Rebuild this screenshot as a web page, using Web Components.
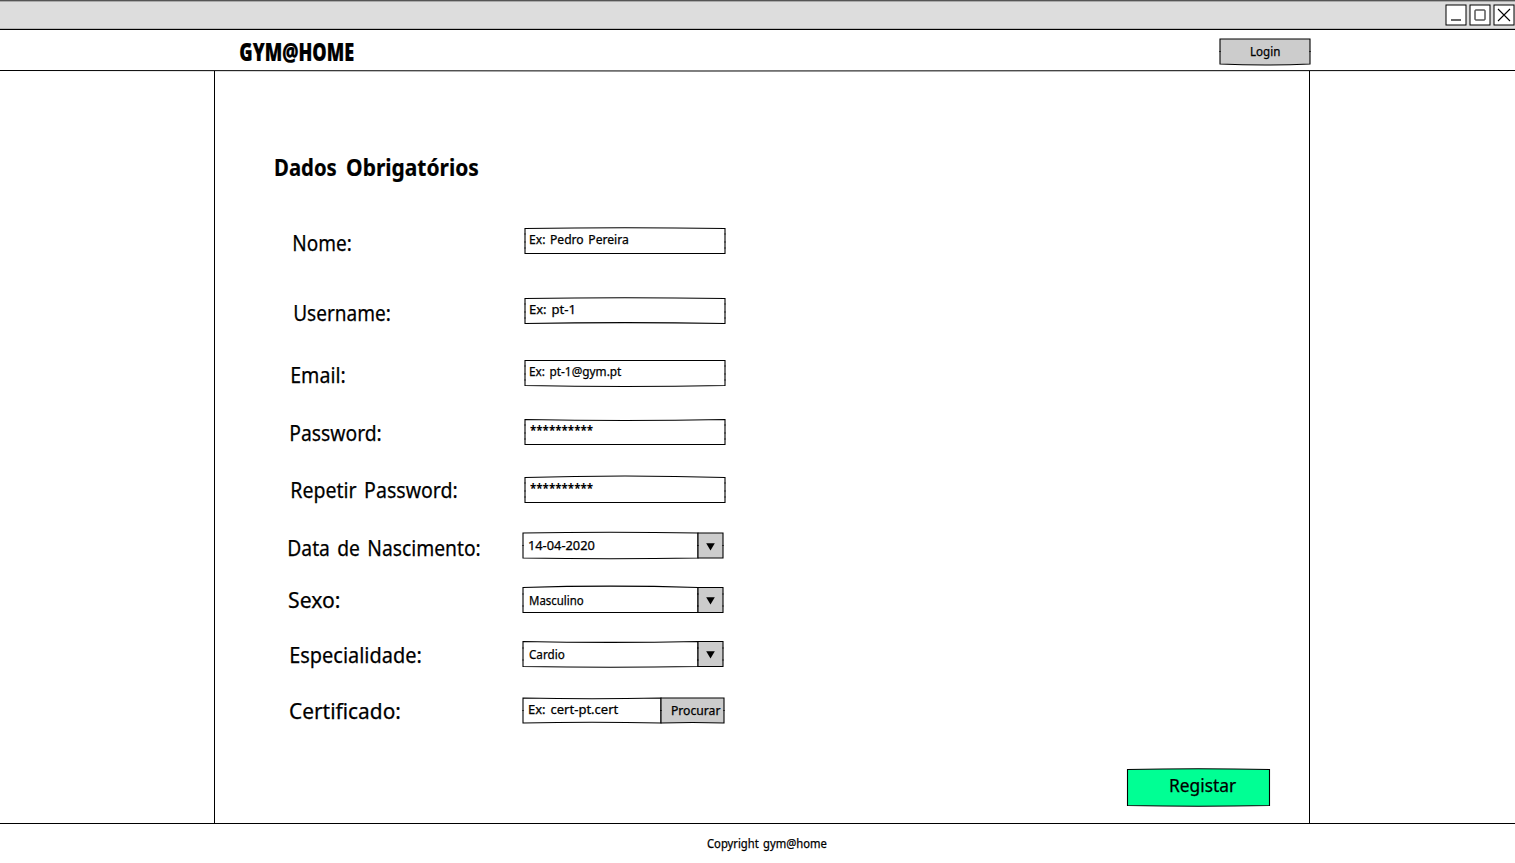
<!DOCTYPE html>
<html lang="pt">
<head>
<meta charset="utf-8">
<title>GYM@HOME</title>
<style>
html,body{margin:0;height:100%;background:#fff;color:#000;font-family:"Noto Sans",sans-serif;overflow:hidden}
</style>
</head>
<body>
<gym-page></gym-page>
<script>
const pen = document.createElement('canvas').getContext('2d');

// A line of text whose ink fills a given width: w = ink width, base = baseline from the top of its container.
class SkText extends HTMLElement {
  connectedCallback() {
    const n = (a, d) => this.hasAttribute(a) ? +this.getAttribute(a) : d;
    const size = n('size', 12), w = n('w', 50), weight = n('weight', 400), x = n('x', 0), stroke = n('stroke', .25);
    const lh = Math.round(size * 1.4), gap = (size * .12).toFixed(2);
    const top = n('base', size) - Math.round(lh / 2 + 0.388 * size);
    pen.font = `${weight} ${size}px "Noto Sans", sans-serif`;
    pen.wordSpacing = gap + 'px';
    const m = pen.measureText(this.textContent);
    const s = w / (m.actualBoundingBoxLeft + m.actualBoundingBoxRight);
    const root = this.attachShadow({mode: 'open'});
    root.innerHTML = `<style>
      :host{display:block;flex:none;width:${w}px;height:${lh}px;margin:${top}px 0 0 ${x}px}
      span{display:block;width:max-content;white-space:pre;font:${weight} ${size}px/${lh}px "Noto Sans",sans-serif;
        word-spacing:${gap}px;-webkit-text-stroke:${stroke}px #000;transform-origin:0 0;
        transform:scaleX(${s}) translateX(${m.actualBoundingBoxLeft}px)}
    </style><span><slot></slot></span>`;
  }
}
customElements.define('sk-text', SkText);

// A box with hand-drawn edges: tb and bb say how far the top and bottom edges bow.
class SkBox extends HTMLElement {
  connectedCallback() {
    const n = (a, d) => this.hasAttribute(a) ? +this.getAttribute(a) : d;
    const w = n('w', 200), h = n('h', 25), tb = n('tb', 0), bb = n('bb', 0), o = n('off', .5), ox = n('offx', 0);
    const fill = this.getAttribute('fill') || '#fff';
    const ticks = (this.getAttribute('ticks') || '').split(',').filter(Boolean).map(Number)
      .map(y => `M-1 ${y + .5}h2M${w - 1} ${y + .5}h2`).join('');
    this.attachShadow({mode: 'open'}).innerHTML = `<style>
      :host{display:flex;align-items:flex-start;flex:none;position:relative;box-sizing:border-box;width:${w}px;height:${h}px}
      svg{position:absolute;left:0;top:0;overflow:visible}
      .in{position:relative;display:flex;align-items:flex-start}
    </style>
    <svg width="${w}" height="${h}"><g transform="translate(${ox} ${o})">
      <path d="M0 0Q${w/2} ${2*tb} ${w} 0V${h}Q${w/2} ${h+2*bb} 0 ${h}Z" fill="${fill}" stroke="#000" stroke-width="1.1"/>
      <path d="${ticks}" stroke="#000" stroke-width=".6" fill="none"/></g></svg>
    <div class="in"><slot></slot></div>`;
  }
}
customElements.define('sk-box', SkBox);

class SkCaret extends HTMLElement {
  connectedCallback() {
    this.attachShadow({mode: 'open'}).innerHTML = `<style>:host{display:block;margin:10px 0 0 8px}svg{display:block}</style>
    <svg width="9" height="8"><path d="M.2.2H8.8L4.5 7.6Z"/></svg>`;
  }
}
customElements.define('sk-caret', SkCaret);

class FormRow extends HTMLElement {
  connectedCallback() {
    this.attachShadow({mode: 'open'}).innerHTML = `<style>
      :host{display:grid;grid-template-columns:${this.getAttribute('col')}px auto;justify-content:start;align-items:start;height:${this.getAttribute('h')}px}
      .field{display:flex}
    </style><slot name="label"></slot><div class="field"><slot></slot></div>`;
  }
}
customElements.define('form-row', FormRow);

class WindowBar extends HTMLElement {
  connectedCallback() {
    this.attachShadow({mode: 'open'}).innerHTML = `<style>
      :host{display:flex;justify-content:flex-end;box-sizing:border-box;height:30px;background:linear-gradient(#555 0 1px,#aaa 1px 2px,#ddd 2px 28px,#b8b8b8 28px 29px,#000 29px)}
      svg{display:block;margin-top:4px}
    </style>
    <svg width="70" height="22" fill="none" stroke="#000">
      <g fill="#fff"><rect x="1" y="1" width="20" height="20"/><rect x="25" y="1" width="20" height="20"/><rect x="49" y="1" width="20" height="20"/></g>
      <path d="M6 16H16" stroke-width="1.2"/><rect x="30" y="6" width="10" height="10" rx=".5"/>
      <path d="M53 5L65 17M65 5L53 17" stroke-width="1.1"/>
    </svg>`;
  }
}
customElements.define('window-bar', WindowBar);

class SiteHeader extends HTMLElement {
  connectedCallback() {
    this.attachShadow({mode: 'open'}).innerHTML = `<style>
      :host{display:flex;justify-content:space-between;align-items:flex-start;position:relative;box-sizing:border-box;height:41px;padding:0 205px 0 240px}
      sk-box{margin-top:9px}
      .rule{position:absolute;left:0;top:39px;width:100%;height:3px;overflow:visible}
    </style>
    <sk-text w="114" size="24" weight="900" base="31" stroke=".2">GYM@HOME</sk-text>
    <sk-box w="90" h="25" off="0" bb="1" fill="#ccc" ticks="12"><sk-text x="31" w="29" base="17">Login</sk-text></sk-box>
    <svg class="rule" viewBox="0 0 1515 3" preserveAspectRatio="none"><path d="M0 1.5L700 2L1515 1.5" fill="none" stroke="#000"/></svg>`;
  }
}
customElements.define('site-header', SiteHeader);

class GymForm extends HTMLElement {
  connectedCallback() {
    const rows = [
      // label, ink x, ink width, baseline, row height, field column, field
      ['Nome:', 78.5, 57, 23, 70, 310, this.input('Ex: Pedro Pereira', 98, -.8, 0)],
      ['Username:', 78.5, 96, 23, 62, 310, this.input('Ex: pt-1', 44, -.8, -.9)],
      ['Email:', 76.5, 53, 23, 59, 310, this.input('Ex: pt-1@gym.pt', 92, 0, 1)],
      ['Password:', 76, 90, 22, 58, 310, this.input('**********', 63, 1, 0)],
      ['Repetir Password:', 76.5, 165, 21, 56, 310, this.input('**********', 63, -1.5, 0)],
      ['Data de Nascimento:', 74, 191, 23, 54, 308, this.select('14-04-2020', 5.5, 66, 17, -.7, .7, 0, '12')],
      ['Sexo:', 73.5, 50.5, 21, 54, 308, this.select('Masculino', 6.5, 53.5, 18, -1.4, 0, .5, '6,18')],
      ['Especialidade:', 75.5, 130, 22, 57, 308, this.select('Cardio', 6, 35.5, 18, .9, .8, .5, '6,18')],
      ['Certificado:', 75, 110, 21, 70, 308,
        `<sk-box w="138" h="25" off="0" tb=".8" bb="-.8" ticks="12"><sk-text x="5.5" w="90" base="16">Ex: cert-pt.cert</sk-text></sk-box>
         <sk-box w="63" h="25" off="0" bb="-.5" fill="#ccc" ticks="12"><sk-text x="11" w="48.5" base="17">Procurar</sk-text></sk-box>`]
    ];
    this.attachShadow({mode: 'open'}).innerHTML = `<style>
      :host{display:flex;flex-direction:column;box-sizing:border-box;width:1096px;height:752px;margin-left:214px;border:solid #000;border-width:0 1px}
      .title{display:flex;height:157px}
      .actions{display:flex;justify-content:flex-end;padding-right:40px;margin-top:2px}
    </style>
    <div class="title"><sk-text x="59.5" w="61.5" size="22.5" weight="700" base="105" stroke=".2">Dados</sk-text><sk-text x="10.5" w="131.5" size="22.5" weight="700" base="105" stroke=".2">Obrigatórios</sk-text></div>
    ${rows.map(([t, x, w, b, h, c, f]) => `<form-row h="${h}" col="${c}"><sk-text slot="label" x="${x}" w="${w}" size="22" base="${b}">${t}</sk-text>${f}</form-row>`).join('')}
    <div class="actions"><sk-box w="142" h="36" off="-.5" offx=".5" tb="-.7" bb=".7" fill="#00ff94"><sk-text x="43" w="66" size="17.5" base="22">Registar</sk-text></sk-box></div>`;
  }
  input(text, w, tb, bb) {
    const stars = text[0] === '*';
    return `<sk-box w="200" h="25" tb="${tb}" bb="${bb}" ticks="5,13,19"><sk-text x="5" w="${w}" ${stars ? 'size="13" weight="700" base="16" stroke="0"' : 'base="16"'}>${text}</sk-text></sk-box>`;
  }
  select(text, x, w, base, tb, bb, off, ticks) {
    return `<sk-box w="175" h="25" tb="${tb}" bb="${bb}" off="${off}" ticks="${ticks}"><sk-text x="${x}" w="${w}" base="${base}">${text}</sk-text></sk-box>
      <sk-box w="25" h="25" off="${off}" fill="#ccc" ticks="${ticks}"><sk-caret></sk-caret></sk-box>`;
  }
}
customElements.define('gym-form', GymForm);

class GymPage extends HTMLElement {
  connectedCallback() {
    this.attachShadow({mode: 'open'}).innerHTML = `<style>
      :host{display:flex;flex-direction:column;width:1515px;height:863px;overflow:hidden}
      footer{display:flex;box-sizing:border-box;height:40px;border-top:1px solid #000}
    </style>
    <window-bar></window-bar><site-header></site-header><gym-form></gym-form>
    <footer><sk-text x="707" w="120" base="24">Copyright gym@home</sk-text></footer>`;
  }
}
customElements.define('gym-page', GymPage);
</script>
</body>
</html>
